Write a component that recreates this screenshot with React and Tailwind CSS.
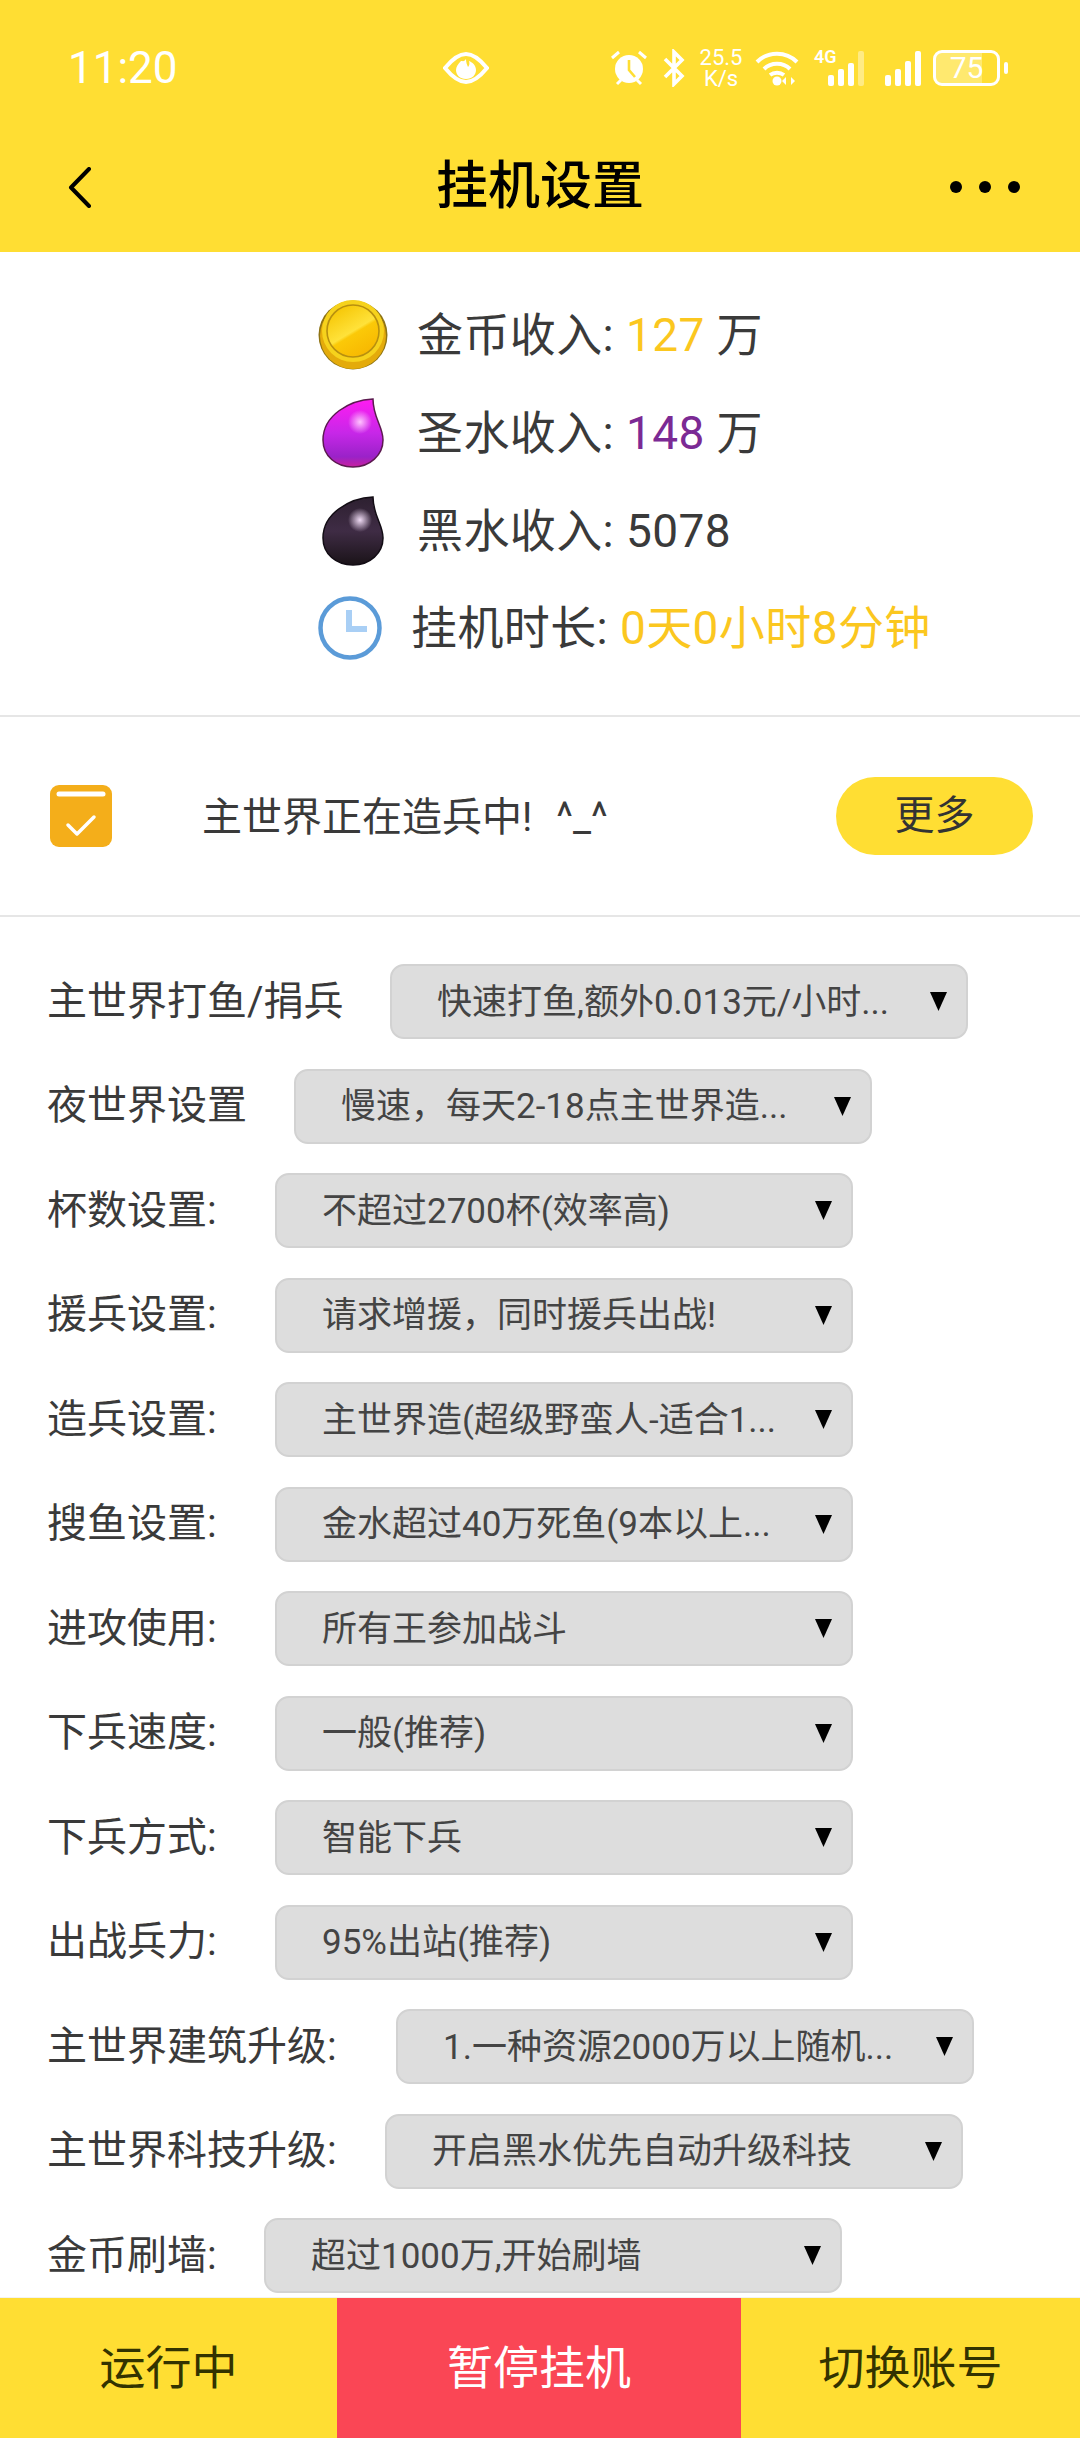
const settings = [
  { label: "主世界打鱼/捐兵", value: "快速打鱼,额外0.013元/小时...", gap: "w-[343px]" },
  { label: "夜世界设置", value: "慢速，每天2-18点主世界造...", gap: "w-[247px]" },
  { label: "杯数设置:", value: "不超过2700杯(效率高)", gap: "w-[228px]" },
  { label: "援兵设置:", value: "请求增援，同时援兵出战!", gap: "w-[228px]" },
  { label: "造兵设置:", value: "主世界造(超级野蛮人-适合1...", gap: "w-[228px]" },
  { label: "搜鱼设置:", value: "金水超过40万死鱼(9本以上...", gap: "w-[228px]" },
  { label: "进攻使用:", value: "所有王参加战斗", gap: "w-[228px]" },
  { label: "下兵速度:", value: "一般(推荐)", gap: "w-[228px]" },
  { label: "下兵方式:", value: "智能下兵", gap: "w-[228px]" },
  { label: "出战兵力:", value: "95%出站(推荐)", gap: "w-[228px]" },
  { label: "主世界建筑升级:", value: "1.一种资源2000万以上随机...", gap: "w-[349px]" },
  { label: "主世界科技升级:", value: "开启黑水优先自动升级科技", gap: "w-[338px]" },
  { label: "金币刷墙:", value: "超过1000万,开始刷墙", gap: "w-[217px]" },
];

const Coin = () => (
  <svg width="70" height="70" viewBox="0 0 70 70">
    <defs>
      <linearGradient id="coinFace" x1="0.2" y1="0" x2="0.8" y2="1">
        <stop offset="0" stopColor="#f5c400" />
        <stop offset="0.5" stopColor="#ffe23a" />
        <stop offset="0.55" stopColor="#fbc908" />
        <stop offset="1" stopColor="#f7b500" />
      </linearGradient>
    </defs>
    <circle cx="35" cy="35" r="34.5" fill="#8f7414" />
    <circle cx="35" cy="36" r="33" fill="#e4ab0b" />
    <circle cx="35" cy="31" r="31" fill="#f6d21c" />
    <circle cx="35" cy="31" r="26" fill="url(#coinFace)" stroke="#b8900f" strokeWidth="1.6" />
  </svg>
);

const Drop = ({ id, stops, shine, stroke }) => (
  <svg width="62" height="70" viewBox="0 0 62 70">
    <defs>
      <linearGradient id={id} x1="0" y1="0" x2="0" y2="1">
        {stops.map(([offset, color]) => (
          <stop key={offset} offset={offset} stopColor={color} />
        ))}
      </linearGradient>
      <radialGradient id={`${id}-shine`} cx="0.5" cy="0.5" r="0.5">
        <stop offset="0" stopColor={shine} stopOpacity="1" />
        <stop offset="1" stopColor={shine} stopOpacity="0" />
      </radialGradient>
    </defs>
    <path
      d="M51 1C28 2 1 17 1 42c0 16 13 27 30 27s30-12 30-27c0-14-10-22-10-41z"
      fill={`url(#${id})`}
      stroke={stroke}
      strokeWidth="1.5"
    />
    <circle cx="38" cy="24" r="12" fill={`url(#${id}-shine)`} />
  </svg>
);

const Clock = () => (
  <svg width="64" height="64" viewBox="0 0 64 64" fill="none">
    <circle cx="32" cy="32" r="29.5" stroke="#5b9bd8" strokeWidth="4.5" />
    <path d="M31 14v19h18" stroke="#a9cff5" strokeWidth="6" />
  </svg>
);

const TaskIcon = () => (
  <svg width="62" height="62" viewBox="0 0 62 62" fill="none">
    <rect width="62" height="62" rx="9" fill="#f4ae1a" />
    <path d="M9 9h44" stroke="#fff" strokeWidth="5" strokeLinecap="round" />
    <path d="M18 40l9 9 17-17" stroke="#fff" strokeWidth="3.5" strokeLinecap="round" strokeLinejoin="round" />
  </svg>
);

const StatusIcons = () => (
  <div className="flex items-center text-white">
    <svg width="40" height="36" viewBox="0 0 38 36" fill="none">
      <circle cx="19" cy="19" r="14" fill="#fff" />
      <path d="M19 10v10l6 7" stroke="#ffde33" strokeWidth="2.6" />
      <path d="M2 8l7-6M36 8l-7-6M7 34l4-4M31 34l-4-4" stroke="#fff" strokeWidth="3" />
    </svg>
    <svg className="ml-[14px]" width="22" height="38" viewBox="0 0 22 38" fill="none">
      <path d="M2 10l17 17-8 8V3l8 8L2 28" stroke="#fff" strokeWidth="3.6" />
    </svg>
    <div className="ml-[14px] flex w-[44px] flex-col items-center text-[22px] leading-[21px]">
      <span>25.5</span>
      <span>K/s</span>
    </div>
    <svg className="ml-[12px]" width="46" height="36" viewBox="0 0 46 36" fill="none">
      <path d="M2 12c11-11 29-11 40 0M9 19c7-7 19-7 26 0M15 25c4-3 10-3 14 0" stroke="#fff" strokeWidth="4" />
      <circle cx="22" cy="31" r="4.5" fill="#fff" />
      <path d="M31 27v8l-4-4zM36 27v8l4-4z" fill="#fff" />
    </svg>
    <div className="relative ml-[13px] h-[36px] w-[50px]">
      <span className="absolute top-[-3px] left-0 text-[18px] leading-[20px] font-semibold">4G</span>
      <div className="absolute right-0 bottom-0 flex items-end gap-[4px]">
        <div className="h-[11px] w-[6px] rounded-[2px] bg-white" />
        <div className="h-[17px] w-[6px] rounded-[2px] bg-white" />
        <div className="h-[23px] w-[6px] rounded-[2px] bg-white" />
        <div className="h-[35px] w-[6px] rounded-[2px] bg-white/40" />
      </div>
    </div>
    <div className="ml-[21px] flex items-end gap-[4px]">
      <div className="h-[11px] w-[6px] rounded-[2px] bg-white" />
      <div className="h-[17px] w-[6px] rounded-[2px] bg-white" />
      <div className="h-[25px] w-[6px] rounded-[2px] bg-white" />
      <div className="h-[35px] w-[6px] rounded-[2px] bg-white" />
    </div>
    <div className="ml-[12px] flex h-[36px] w-[67px] items-center justify-center rounded-[9px] border-[3px] border-white bg-[linear-gradient(90deg,#ffe96f_75%,transparent_75%)] text-[30px] leading-none">
      75
    </div>
    <div className="ml-[4px] h-[12px] w-[4px] rounded-[2px] bg-white" />
  </div>
);

const SettingRow = ({ label, value, gap }) => (
  <div className="flex h-[75px] items-center">
    <div className={`${gap} shrink-0 text-[40px] leading-[50px] whitespace-nowrap text-[#3a3a3a]`}>
      {label}
    </div>
    <div className="flex h-[75px] w-[578px] items-center rounded-[14px] border-2 border-[#d2d2d2] bg-[#dddddd] pr-[19px] pl-[45px]">
      <span className="min-w-0 flex-1 pt-[2px] text-[35px] leading-[46px] whitespace-nowrap text-[#444444]">
        {value}
      </span>
      <svg className="ml-2 shrink-0" width="17" height="19" viewBox="0 0 17 19">
        <path d="M0 0h17l-8.5 19z" fill="#000" />
      </svg>
    </div>
  </div>
);

const App = () => {
  return (
    <div className="flex h-[2438px] w-[1080px] flex-col overflow-hidden bg-white font-['Roboto','Noto_Sans_CJK_SC',sans-serif]">
      <header className="h-[252px] shrink-0 bg-[#ffde33]">
        <div className="flex h-[134px] items-center pt-[2px] pr-[72px] pl-[68px] text-white">
          <span className="w-[190px] text-[44px] leading-none">11:20</span>
          <svg className="ml-[185px]" width="46" height="32" viewBox="0 0 46 32" fill="none">
            <path d="M2 16C11 5 18 2 23 2s12 3 21 14c-9 11-16 14-21 14S11 27 2 16z" stroke="#fff" strokeWidth="4" />
            <path d="M23 7c-2 3-3 2-5 2-3 3-5 6-5 9 0 5 4 9 10 9s10-4 10-9c0-5-4-8-7-9 1 3 0 5-1 6-1-2-2-5-2-8z" fill="#fff" />
          </svg>
          <div className="ml-auto">
            <StatusIcons />
          </div>
        </div>
        <div className="flex h-[106px] items-center justify-between px-[60px]">
          <div className="w-[70px] pl-[8px]">
            <svg width="24" height="41" viewBox="0 0 24 41" fill="none">
              <path d="M21 2L3 20.5 21 39" stroke="#000" strokeWidth="4" strokeLinecap="round" strokeLinejoin="round" />
            </svg>
          </div>
          <h1 className="text-[52px] leading-[64px] font-medium text-black">挂机设置</h1>
          <div className="flex w-[70px] gap-[17px]">
            <div className="size-[12px] rounded-full bg-black" />
            <div className="size-[12px] rounded-full bg-black" />
            <div className="size-[12px] rounded-full bg-black" />
          </div>
        </div>
      </header>

      <section className="shrink-0 border-b-2 border-[#e6e6e6] pt-[34px] pb-[39px] pl-[318px] text-[46px] leading-[56px] tracking-[0.4px] text-[#3a3a3a]">
        <div className="flex h-[98px] items-center">
          <div className="w-[99px] shrink-0"><Coin /></div>
          <span>金币收入: <span className="text-[#fbc71f]">127</span> 万</span>
        </div>
        <div className="flex h-[98px] items-center">
          <div className="w-[99px] shrink-0 pl-[4px]">
            <Drop
              id="holy"
              stroke="#5c1a50"
              shine="#ffc4ff"
              stops={[["0", "#ff1cf2"], ["0.5", "#c727e8"], ["0.85", "#9a22c8"], ["1", "#c8209f"]]}
            />
          </div>
          <span>圣水收入: <span className="text-[#7b2a94]">148</span> 万</span>
        </div>
        <div className="flex h-[98px] items-center">
          <div className="w-[99px] shrink-0 pl-[4px]">
            <Drop
              id="dark"
              stroke="#120c14"
              shine="#f0dcf5"
              stops={[["0", "#2d2030"], ["0.5", "#3f2c45"], ["1", "#1a1318"]]}
            />
          </div>
          <span>黑水收入: 5078</span>
        </div>
        <div className="flex h-[96px] items-center">
          <div className="w-[93px] shrink-0"><Clock /></div>
          <span>挂机时长: <span className="text-[#fbc71f]">0天0小时8分钟</span></span>
        </div>
      </section>

      <section className="flex h-[200px] shrink-0 items-center border-b-2 border-[#e6e6e6] pr-[47px] pl-[50px]">
        <TaskIcon />
        <span className="ml-[90px] pt-[3px] text-[40px] leading-[50px] text-[#3a3a3a]">
          主世界正在造兵中!<span className="ml-[24px]">^_^</span>
        </span>
        <button className="ml-auto h-[78px] w-[197px] rounded-full bg-[#ffde33] text-[40px] text-[#333333]">
          更多
        </button>
      </section>

      <main className="flex min-h-0 flex-1 flex-col gap-[29.5px] overflow-hidden pt-[47px] pl-[47px]">
        {settings.map((item) => (
          <SettingRow key={item.label} label={item.label} value={item.value} gap={item.gap} />
        ))}
      </main>

      <footer className="flex h-[141px] shrink-0 border-t border-[#f2f2f2] text-[46px] leading-[56px]">
        <div className="flex w-[337px] items-center justify-center bg-[#ffde33] text-[#333300]">运行中</div>
        <div className="flex w-[404px] items-center justify-center bg-[#fa4655] text-white">暂停挂机</div>
        <div className="flex flex-1 items-center justify-center bg-[#ffde33] text-[#333300]">切换账号</div>
      </footer>
    </div>
  );
};

export default App;
